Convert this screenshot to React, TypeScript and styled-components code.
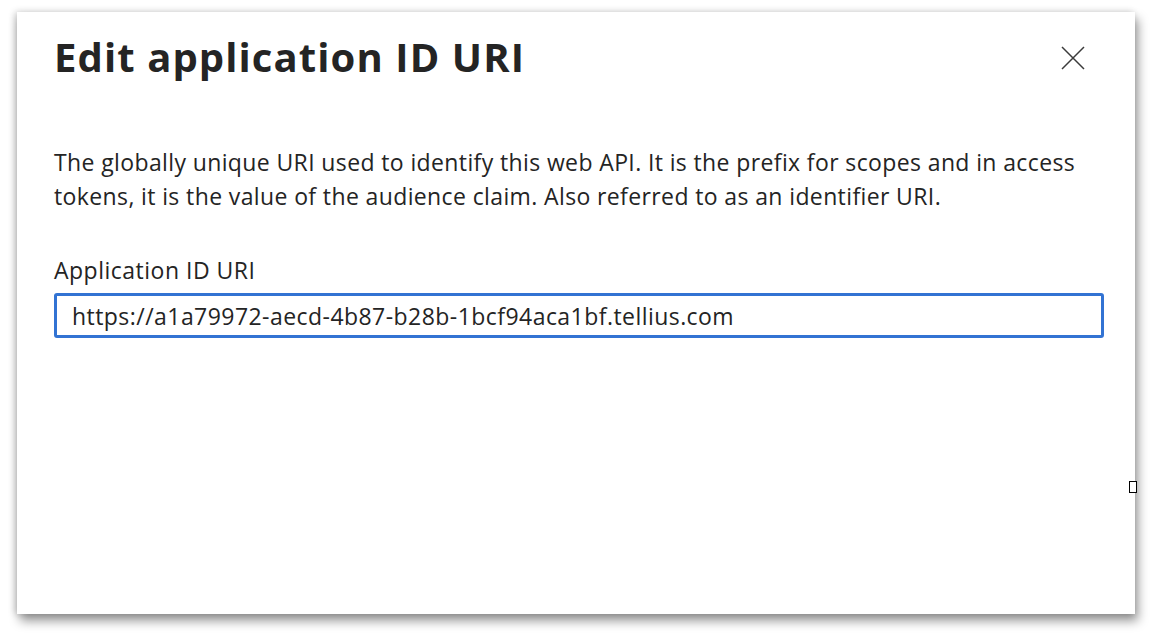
import React from "react";
import styled, { createGlobalStyle } from "styled-components";

const Global = createGlobalStyle`
  html, body { margin: 0; padding: 0; background: #ffffff; }
  body { font-family: "Open Sans", "Noto Sans", sans-serif; color: #242424; }
`;

const Stage = styled.div`
  position: relative;
  width: 1153px;
  height: 635px;
  padding: 12px 0 0 17px;
  box-sizing: border-box;
  overflow: hidden;
`;

const Panel = styled.div`
  width: 1118px;
  height: 602px;
  background: #ffffff;
  box-shadow: 3px 7px 10px rgba(0, 0, 0, 0.4), -2px 0 7px rgba(0, 0, 0, 0.2);
  box-sizing: border-box;
  padding: 20px 36px 0 37px;
  display: flex;
  flex-direction: column;
`;

const Header = styled.div`
  display: flex;
  align-items: flex-start;
  justify-content: space-between;
`;

const Title = styled.h1`
  margin: 0;
  font-size: 40px;
  line-height: 50px;
  font-weight: 700;
  letter-spacing: 1.1px;
  color: #242424;
`;

const Close = styled.button`
  border: none;
  background: transparent;
  padding: 0;
  margin: 14px 14px 0 0;
  width: 24px;
  height: 24px;
  display: flex;
  cursor: pointer;
`;

const Description = styled.p`
  margin: 63px 0 0 0;
  font-size: 23px;
  line-height: 34px;
  letter-spacing: 0.38px;
  color: #242424;
  max-width: 1050px;
`;

const Label = styled.label`
  display: block;
  margin-top: 42px;
  font-size: 23px;
  line-height: 30px;
  letter-spacing: 0.5px;
  color: #242424;
`;

const Input = styled.input`
  margin-top: 8px;
  width: 1050px;
  height: 45px;
  box-sizing: border-box;
  border: 3px solid #3273d3;
  border-radius: 3px;
  padding: 0 15px;
  font-family: "Open Sans", "Noto Sans", sans-serif;
  font-size: 23px;
  letter-spacing: 0.45px;
  color: #242424;
  outline: none;
`;

const Marker = styled.div`
  position: absolute;
  left: 1129px;
  top: 481px;
  width: 8px;
  height: 12px;
  box-sizing: border-box;
  border: 1.5px solid #000;
  background: #fff;
`;

export default function App() {
  return (
    <>
      <Global />
      <Stage>
        <Panel>
          <Header>
            <Title>Edit application ID URI</Title>
            <Close aria-label="Close">
              <svg width="24" height="24" viewBox="0 0 24 24">
                <path d="M1 1 L23 23 M23 1 L1 23" stroke="#3b3b3b" strokeWidth="1.5" fill="none" />
              </svg>
            </Close>
          </Header>
          <Description>
            The globally unique URI used to identify this web API. It is the prefix for scopes and in access tokens, it is the value of the audience claim. Also referred to as an identifier URI.
          </Description>
          <Label htmlFor="appid">Application ID URI</Label>
          <Input id="appid" defaultValue="https://a1a79972-aecd-4b87-b28b-1bcf94aca1bf.tellius.com" />
        </Panel>
        <Marker />
      </Stage>
    </>
  );
}
